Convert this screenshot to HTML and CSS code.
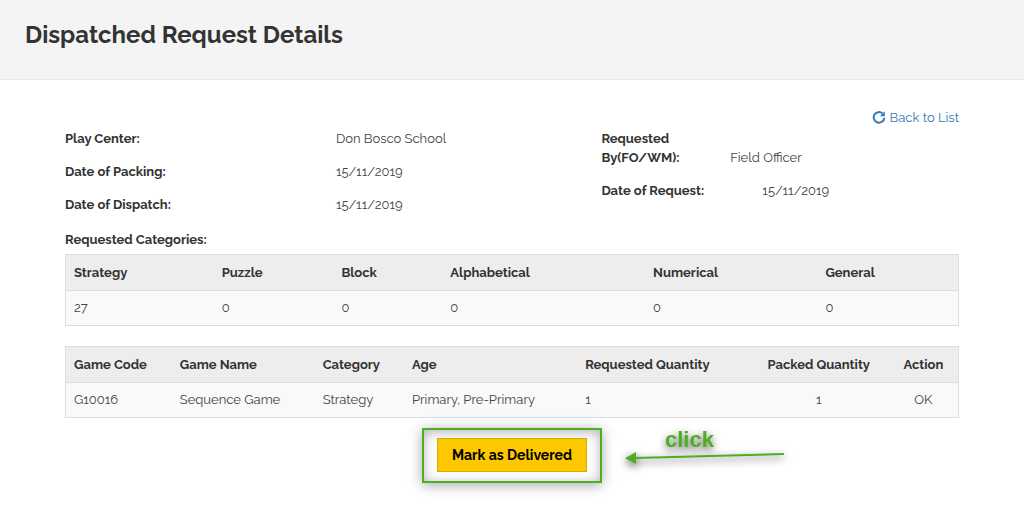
FILE: index.html
```
<!DOCTYPE html>
<html lang="en">
<head>
<meta charset="utf-8">
<meta name="viewport" content="width=device-width, initial-scale=1">
<title>Dispatched Request Details</title>
<link rel="stylesheet" href="styles.css">
</head>
<body>
<header class="page-header">
  <h1 class="page-title">Dispatched Request Details</h1>
</header>
<main class="content">
  <div class="toolbar">
    <a class="back-link" href="#">
      <svg class="back-icon" viewBox="0 0 14 14" aria-hidden="true">
        <path d="M12.300 6.800A5.300 5.300 0 1 1 10.500 2.400" fill="none" stroke="currentColor" stroke-width="2"/>
        <path d="M12.800 .3V5.200H7.900Z" fill="currentColor"/>
      </svg>
      Back to List</a>
  </div>
  <div class="details">
    <dl class="detail-list">
      <div class="detail"><dt>Play Center:</dt><dd>Don Bosco School</dd></div>
      <div class="detail"><dt>Date of Packing:</dt><dd>15/11/2019</dd></div>
      <div class="detail"><dt>Date of Dispatch:</dt><dd>15/11/2019</dd></div>
    </dl>
    <dl class="detail-list">
      <div class="detail detail-requester"><dt>Requested By(FO/WM):</dt><dd>Field Officer</dd></div>
      <div class="detail detail-date"><dt>Date of Request:</dt><dd>15/11/2019</dd></div>
    </dl>
  </div>
  <h2 class="section-title" id="categories">Requested Categories:</h2>
  <table class="table" aria-labelledby="categories">
    <colgroup>
      <col style="width:16.6%"><col style="width:13.4%"><col style="width:12.2%"><col style="width:22.7%"><col style="width:19.3%"><col style="width:15.8%">
    </colgroup>
    <thead>
      <tr><th>Strategy</th><th>Puzzle</th><th>Block</th><th>Alphabetical</th><th>Numerical</th><th>General</th></tr>
    </thead>
    <tbody>
      <tr><td>27</td><td>0</td><td>0</td><td>0</td><td>0</td><td>0</td></tr>
    </tbody>
  </table>
  <table class="table" aria-label="Games">
    <colgroup>
      <col style="width:11.9%"><col style="width:16%"><col style="width:10%"><col style="width:19.4%"><col style="width:19.2%"><col style="width:15.7%"><col style="width:7.8%">
    </colgroup>
    <thead>
      <tr><th>Game Code</th><th>Game Name</th><th>Category</th><th>Age</th><th>Requested Quantity</th><th class="center">Packed Quantity</th><th class="center">Action</th></tr>
    </thead>
    <tbody>
      <tr><td>G10016</td><td>Sequence Game</td><td>Strategy</td><td>Primary, Pre-Primary</td><td>1</td><td class="center">1</td><td class="center">OK</td></tr>
    </tbody>
  </table>
  <div class="actions">
    <div class="highlight">
      <button class="button" type="button">Mark as Delivered</button>
      <div class="callout">
        <span class="callout-text">click</span>
        <svg class="callout-arrow" viewBox="0 0 160 14" aria-hidden="true">
          <path d="M10 8L159 4" fill="none" stroke="#4caf1f" stroke-width="2"/>
          <path d="M0 8.200L11 2V14Z" fill="#4caf1f"/>
        </svg>
      </div>
    </div>
  </div>
</main>
</body>
</html>
```
FILE: styles.css
```
* { box-sizing: border-box; }

body {
  margin: 0;
  background: #fff;
  color: #333;
  font: 13px/19px Raleway, Inter, sans-serif;
}

.page-header {
  padding: 20px 25px 29px;
  background: #f4f4f4;
  border-bottom: 1px solid #eaeaea;
}

.page-title {
  margin: 0;
  font-size: 24px;
  line-height: 30px;
  font-weight: 700;
}

.content { padding: 28px 65px; }

.toolbar {
  display: flex;
  justify-content: flex-end;
  margin-bottom: 2px;
}

.back-link {
  display: flex;
  align-items: center;
  gap: 4px;
  color: #337ab7;
  text-decoration: none;
}

.back-icon { width: 14px; height: 14px; }

.details {
  display: grid;
  grid-template-columns: 3fr 2fr;
}

.detail-list {
  display: flex;
  flex-direction: column;
  gap: 14px;
  margin: 0;
}

.detail {
  display: grid;
  grid-template-columns: 50.5% 1fr;
  align-items: end;
}

.detail-requester { grid-template-columns: 36% 1fr; }
.detail-date { grid-template-columns: 45% 1fr; }
.detail dt { font-weight: 700; }
.detail dd { margin: 0; color: #444; }

.section-title {
  margin: 16px 0 5px;
  font-size: 13px;
  line-height: 19px;
  font-weight: 700;
}

.table {
  width: 100%;
  margin-bottom: 20px;
  table-layout: fixed;
  border-collapse: collapse;
  border: 1px solid #ddd;
  background: #f9f9f9;
}

.table th,
.table td {
  padding: 8px;
  border-bottom: 1px solid #ddd;
  text-align: left;
  white-space: nowrap;
}

.table th { background: #ededed; font-weight: 700; }
.table td { color: #444; line-height: 18px; }
.table .center { text-align: center; }
.table:last-of-type { margin-bottom: 10px; }

.actions { display: flex; justify-content: center; }

.highlight {
  position: relative;
  padding: 8px 13px 9px;
  border: 2px solid #4caf1f;
  box-shadow: 0 2px 12px rgba(0, 0, 0, .35), inset 0 2px 12px rgba(0, 0, 0, .3);
}

.button {
  display: block;
  padding: 6px 14px;
  border: 1px solid #d9ab00;
  background: #fdc800;
  color: #000;
  font: 700 14px/20px Raleway, Inter, sans-serif;
}

.callout {
  position: absolute;
  left: 100%;
  top: 0;
  width: 160px;
  margin-left: 25px;
  filter: drop-shadow(0 3px 4px rgba(0, 0, 0, .7));
}

.callout-text {
  display: block;
  padding-left: 40px;
  color: #4caf1f;
  font: 700 22px/20px "Liberation Sans", Arial, sans-serif;
}

.callout-arrow { display: block; width: 160px; height: 14px; }
```
